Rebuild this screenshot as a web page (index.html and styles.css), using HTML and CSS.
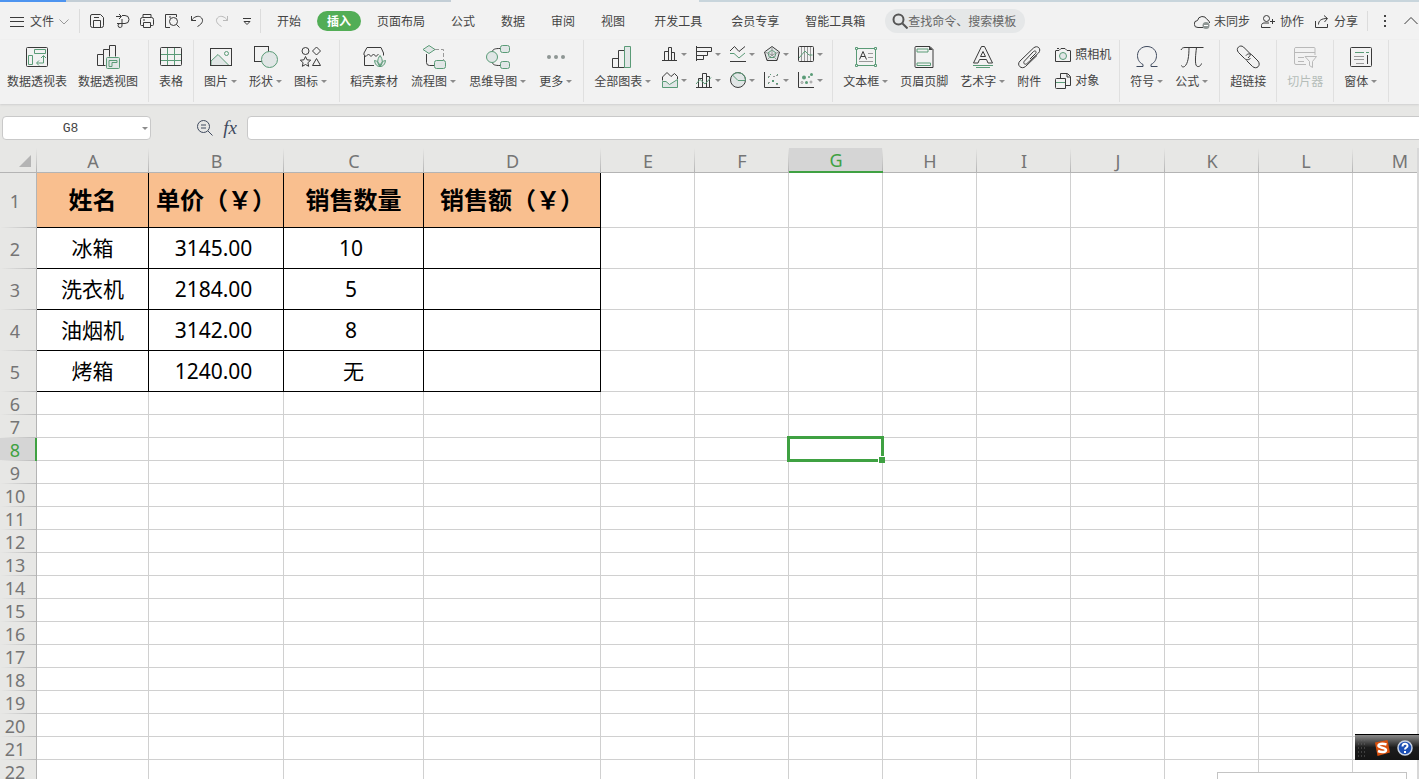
FILE: index.html
```html
<!DOCTYPE html>
<html lang="zh-CN">
<head>
    <meta charset="UTF-8">
    <meta name="viewport" content="width=device-width, initial-scale=1.0">
    <title>表格</title>
    <link rel="stylesheet" href="styles.css">
</head>
<body>
    <div class="doc-tabs">
        <div class="doc-tab active"></div>
        <div class="doc-tab"></div>
        <div class="doc-gap"></div>
        <div class="doc-rest"></div>
    </div>

    <header class="menu-bar">
        <button class="file-btn" type="button">
            <svg class="small" viewBox="0 0 16 16"><path d="M1 3.500h14M1 7.500h14M1 12.500h14"/></svg>
            文件
            <svg class="chevron" viewBox="0 0 10 6"><path class="gray" d="M.5.5 5 5 9.5.5"/></svg>
        </button>
        <div class="quick">
            <button type="button" aria-label="保存"><svg class="small" viewBox="0 0 16 16"><path d="M3 1.500h8.500l3 3V12.500a2 2 0 0 1-2 2h-9a2 2 0 0 1-2-2v-9.500a1.500 1.500 0 0 1 1.500-1.500zM4.500 14V7.500h7V14M5 4.500h5"/></svg></button>
            <button type="button" aria-label="输出"><svg class="small" viewBox="0 0 16 16"><path d="M2 3.500h5M5 1l2.500 2.500L5 6M8 2.500h3a4 4 0 0 1 0 8H3M8 6v6a2 2 0 1 1-2-1.500"/></svg></button>
            <button type="button" aria-label="打印"><svg class="small" viewBox="0 0 16 16"><path d="M4 4.500v-3h8v3M4 12.500H2.500a1 1 0 0 1-1-1v-5a2 2 0 0 1 2-2h9a2 2 0 0 1 2 2v5a1 1 0 0 1-1 1H12M4.500 9.500h7v5h-7zM4 7h2"/></svg></button>
            <button type="button" aria-label="打印预览"><svg class="small" viewBox="0 0 16 16"><path d="M6 14.500H1.500v-13h11V4M5 4h2M12.500 11.500l3 3"/><circle cx="9.500" cy="8.500" r="4"/></svg></button>
            <button type="button" aria-label="撤销"><svg class="small" viewBox="0 0 16 16"><path d="M2.500 3v4.500H7M2.500 7.500C5 3.500 9 2.500 11.500 4c3.500 2.500 2.500 6.500-3 9.500"/></svg></button>
            <button type="button" aria-label="恢复" disabled><svg class="small" viewBox="0 0 16 16"><path class="light" d="M13.500 3v4.500H9M13.500 7.500C11 3.500 7 2.500 4.500 4c-3.500 2.500-2.500 6.500 3 9.500"/></svg></button>
            <button type="button" aria-label="自定义"><svg class="small" viewBox="0 0 16 16"><path d="M4 5.500h8M5 8.500l3 3 3-3z"/></svg></button>
        </div>
        <nav class="tabs">
            <button type="button">开始</button>
            <button class="active" type="button">插入</button>
            <button type="button">页面布局</button>
            <button type="button">公式</button>
            <button type="button">数据</button>
            <button type="button">审阅</button>
            <button type="button">视图</button>
            <button class="dev" type="button">开发工具</button>
            <button type="button">会员专享</button>
            <button type="button">智能工具箱</button>
        </nav>
        <label class="search">
            <svg class="small" viewBox="0 0 16 16"><circle class="thick" cx="6.500" cy="6.500" r="5"/><path class="thick" d="M10.500 10.500l5 5"/></svg>
            <input type="text" placeholder="查找命令、搜索模板" aria-label="查找命令、搜索模板">
        </label>
        <div class="account">
            <button type="button"><svg class="small" viewBox="0 0 16 16"><path d="M9 13.500H4a3.500 3.500 0 0 1-.500-7A5 5 0 0 1 13 5.500c1.500.5 2.500 2 2.500 3.500"/><circle class="dot" cx="12" cy="11.500" r="3.500"/><path class="white" d="M10 11.500h4"/></svg>未同步</button>
            <button type="button"><svg class="small" viewBox="0 0 16 16"><circle cx="6.500" cy="4.500" r="3"/><path d="M10.500 13.500h-9v-2c0-1.500 1-2.500 2.500-2.500h5M10 7.500h5M12.500 5v5"/></svg>协作</button>
            <button type="button"><svg class="small" viewBox="0 0 16 16"><path d="M1.500 7v6.500h12V10M4.500 10.500c0-4 3-6 8.500-6M10 1.500l3.500 3L10.500 8"/></svg>分享</button>
        </div>
        <button class="more-btn" type="button" aria-label="更多"><svg class="small" viewBox="0 0 16 16"><path class="bullets" d="M7 2h2v2H7zM7 7h2v2H7zM7 12h2v2H7z"/></svg></button>
        <button class="fold-btn" type="button" aria-label="收起功能区"><svg class="small" viewBox="0 0 16 16"><path d="M1.500 11 8 4.500l6.500 6.500"/></svg></button>
    </header>

    <section class="ribbon">
        <div class="group first">
            <button class="tool" type="button">
                <svg class="icon" viewBox="0 0 24 24"><rect x="1.500" y="2.500" width="21" height="19" rx="1"/><path class="green" d="M9.500 4.500h11v4h-11zM3.500 10.500h4v9h-4zM18.500 11v7H12M16 13l2.500-2.500L21 13M14 15.500 11.500 18l2.500 2.500"/></svg>
                <span>数据透视表</span>
            </button>
            <button class="tool" type="button">
                <svg class="icon" viewBox="0 0 24 24"><path d="M1.500 20.500v-11h6v-5h6v-4h6v11M1.500 20.500h8M7.500 9.500v11M13.500 4.500v7"/><rect class="green fill" x="10.500" y="12.500" width="13" height="11" rx="1"/><path class="green" d="M13 21.500v-6h8v2h-5v4z"/></svg>
                <span>数据透视图</span>
            </button>
        </div>
        <div class="group">
            <button class="tool" type="button">
                <svg class="icon" viewBox="0 0 24 24"><path class="green" d="M2 9.500h20M2 15.500h20M8.500 3v18M15.500 3v18"/><rect x="1.500" y="2.500" width="21" height="18" rx="1"/></svg>
                <span>表格</span>
            </button>
        </div>
        <div class="group pictures">
            <button class="tool" type="button">
                <svg class="icon" viewBox="0 0 24 24"><path class="green fill" d="M2 16l7-6.500L20 20.500H2z"/><circle class="green" cx="17.500" cy="8.500" r="2"/><rect x="1.500" y="3.500" width="21" height="17"/></svg>
                <span>图片<i class="caret"></i></span>
            </button>
            <button class="tool" type="button">
                <svg class="icon" viewBox="0 0 24 24"><rect x=".500" y="1.500" width="14" height="15"/><circle class="green fill" cx="15.500" cy="14.500" r="8"/></svg>
                <span>形状<i class="caret"></i></span>
            </button>
            <button class="tool" type="button">
                <svg class="icon" viewBox="0 0 24 24"><circle cx="6.500" cy="6" r="3.500"/><path d="M17.500 2l4 4-4 4-4-4zM17.500 13.500l4 7h-8zM6.500 11.500l1.500 3.300 3.700.4-2.800 2.500.8 3.600-3.200-1.800-3.200 1.800.8-3.600-2.800-2.500 3.700-.4z"/></svg>
                <span>图标<i class="caret"></i></span>
            </button>
        </div>
        <div class="group shop">
            <button class="tool" type="button">
                <svg class="icon" viewBox="0 0 24 24"><path d="M2.500 11v9.500H12M5 2.500h14l2.500 5.500v2.500M5 2.500 2 8v2l2 1.500L6.500 9 9 11.500 11.500 9l2.500 2.500L16.500 9"/><path class="green fill" d="M18 21.500c-3-3-3-7 0-11 3 4 3 8 0 11zM18 21.500c-3 0-5-2-5.500-6 3 .5 5 2.500 5.500 6zM18 21.500c3 0 5-2 5.500-6-3 .5-5 2.500-5.500 6z"/></svg>
                <span>稻壳素材</span>
            </button>
            <button class="tool" type="button">
                <svg class="icon" viewBox="0 0 24 24"><path d="M4.500 9v8.500a3 3 0 0 0 3 3H12"/><path class="gray dash" d="M13 4.500h8.500V15"/><path class="green fill" d="M1 4.500l6-4 6 4-6 4z"/><rect class="green fill" x="12.500" y="15.500" width="11" height="8" rx="2"/></svg>
                <span>流程图<i class="caret"></i></span>
            </button>
            <button class="tool" type="button">
                <svg class="icon" viewBox="0 0 24 24"><path d="M6 7c1-3 3-3.500 8-3.500M6 17c1 3 3 3.500 8 3.500"/><circle class="green fill" cx="6" cy="12" r="5.500"/><rect class="green fill" x="14.500" y=".500" width="9" height="7" rx="2"/><rect class="green fill" x="14.500" y="16.500" width="9" height="7" rx="2"/></svg>
                <span>思维导图<i class="caret"></i></span>
            </button>
            <button class="tool" type="button">
                <svg class="icon" viewBox="0 0 24 24"><circle class="dot" cx="5" cy="12" r="2"/><circle class="dot" cx="12" cy="12" r="2"/><circle class="dot" cx="19" cy="12" r="2"/></svg>
                <span>更多<i class="caret"></i></span>
            </button>
        </div>
        <div class="group charts">
            <button class="tool" type="button">
                <svg class="icon" viewBox="0 0 24 24"><path d="M1.500 13.500h6v9h-6zM7.500 5.500h6v17h-6z"/><path class="green fill" d="M13.500 1.500h6v21h-6z"/></svg>
                <span>全部图表<i class="caret"></i></span>
            </button>
            <div class="chart-grid">
                <button type="button" aria-label="柱形图"><svg class="small" viewBox="0 0 16 16"><path d="M0 14.500h15M2.500 14V5.500h4M6.500 14V1.500h3V14M9.500 6.500h3V14"/></svg><i class="caret"></i></button>
                <button type="button" aria-label="条形图"><svg class="small" viewBox="0 0 16 16"><path d="M.500 0v15M.500 1.500h15v4H.500M11.500 5.500v4H.500M7.500 9.500v4H.500"/></svg><i class="caret"></i></button>
                <button type="button" aria-label="折线图"><svg class="small" viewBox="0 0 16 16"><path d="M0 5l4.500-4.500L9 5.500l6-5M0 15.500h16"/><path class="green" d="M0 7.500h4l5 4.500 6-5"/></svg><i class="caret"></i></button>
                <button type="button" aria-label="雷达图"><svg class="small" viewBox="0 0 16 16"><path class="fill" d="M8 .500l7.500 5.500L13 14.500H3L.500 6z"/><path class="green" d="M8 4l4 3-1.500 4.500h-5L4 7z"/><path class="gray" d="M8 1v8L3 14M8 9l5 5M8 9 1 6M8 9l7-3"/></svg><i class="caret"></i></button>
                <button type="button" aria-label="股价图"><svg class="small" viewBox="0 0 16 16"><path class="gray" d="M3.500 1v14M6.500 1v14M9.500 1v14M12.500 1v14"/><path class="green" d="M1 12l3-3.500L7 5l4 4h3.500"/><rect x=".500" y=".500" width="15" height="15" rx="1"/></svg><i class="caret"></i></button>
                <button type="button" aria-label="面积图"><svg class="small" viewBox="0 0 16 16"><path class="green fill" d="M.500 9.500h3.500l3.500 3 8-5v8H.500z"/><path d="M.500 8.500V5L5 .500l4 4 3.500-3 3 3V7"/></svg><i class="caret"></i></button>
                <button type="button" aria-label="组合图"><svg class="small" viewBox="0 0 16 16"><path d="M0 15.500h16M2.500 15V6.500h4M6.500 15V1.500h4V15M10.500 4.500h3V15"/><path class="green" d="M0 12l4-4.500 5 4.500 6-6.500"/></svg><i class="caret"></i></button>
                <button type="button" aria-label="饼图"><svg class="small" viewBox="0 0 16 16"><circle class="fill" cx="8" cy="8" r="7.500"/><path class="green" d="M2.500 3 8 8.500h7.500A7.500 7.500 0 0 0 2.500 3z"/></svg><i class="caret"></i></button>
                <button type="button" aria-label="散点图"><svg class="small" viewBox="0 0 16 16"><path d="M.500 0v15.500H16"/><path class="gdots" d="M8 8h2v2H8zM4 5h1v1H4zM12 11h2v2h-2zM4 11h1v1H4zM6 2h1v1H6zM13 2h1v1h-1z"/><path class="gray" d="M4 4.500h2M9 4.500h2M12 3.500h2M4 10.500h2M12 12.500h2"/></svg><i class="caret"></i></button>
                <button type="button" aria-label="气泡图"><svg class="small" viewBox="0 0 16 16"><path d="M.500 0v15.500H16"/><g class="gdots"><circle cx="6" cy="5.500" r="2"/><circle cx="13.500" cy="2.500" r="1.500"/><circle cx="8.500" cy="10.500" r="1.500"/><circle cx="11" cy="5" r="1"/></g><circle class="gray" cx="4" cy="10.500" r="1"/><circle class="gray" cx="13" cy="10" r="1"/></svg><i class="caret"></i></button>
            </div>
        </div>
        <div class="group text">
            <button class="tool" type="button">
                <svg class="icon" viewBox="0 0 24 24"><rect class="green" x="2.500" y="3.500" width="19" height="17"/><path class="green paper" d="M1.500 2.500h2v2h-2zM20.500 2.500h2v2h-2zM1.500 19.500h2v2h-2zM20.500 19.500h2v2h-2z"/><path d="M5.500 14.500l3.500-8 3.500 8M7 11.500h4"/><path class="gray" d="M14 8.500h5M14 12.500h5M5 16.500h14"/></svg>
                <span>文本框<i class="caret"></i></span>
            </button>
            <button class="tool" type="button">
                <svg class="icon" viewBox="0 0 24 24"><path d="M4 1.500h14l3 3V22.500H4a1 1 0 0 1-1-1v-19a1 1 0 0 1 1-1z"/><path class="ink" d="M17 1l4 4h-4z"/><path class="green" d="M5 4h11v3H5zM5 18h13.500v2.500H5z"/></svg>
                <span>页眉页脚</span>
            </button>
            <button class="tool" type="button">
                <svg class="icon" viewBox="0 0 24 24"><path d="M10.500 1.500h3l8 16.500h-4.500l-1.500-3.500h-7L7 18H2.500zM12 6.500l2.500 5h-5z"/><path class="green" d="M2 20.500h20M5 22.500h14"/></svg>
                <span>艺术字<i class="caret"></i></span>
            </button>
            <button class="tool" type="button">
                <svg class="icon" viewBox="0 0 24 24"><path d="M16.500 6.500l-9 9.500c-2 2 .5 4.500 2.500 2.500L21.500 8C25 4 20.500-.500 16.500 3L3 16c-4 4 1.500 9 5.500 5.500L20 10.500M16.500 6.500c2-1.500 3.500.5 2 2L13 14"/></svg>
                <span>附件</span>
            </button>
            <div class="side-tools">
                <button type="button"><svg class="small" viewBox="0 0 16 16"><path d="M1 3.500h3l2-2h4l2 2h3a.500.500 0 0 1 .500.500v10.500H.500V4a.500.500 0 0 1 .500-.500zM2 1.500h2"/><circle class="green fill" cx="8" cy="9" r="3.500"/></svg>照相机</button>
                <button type="button"><svg class="small" viewBox="0 0 16 16"><path d="M5.500 6V.500h7l3 3V12.500H11M12 1v3h3M1.500 5.500h9v10h-9a1 1 0 0 1-1-1v-8a1 1 0 0 1 1-1z"/><path class="green" d="M1 9.500h9"/></svg>对象</button>
            </div>
        </div>
        <div class="group menus">
            <button class="tool" type="button">
                <svg class="icon" viewBox="0 0 24 24"><path class="navy" d="M1.500 21.500H8v-2C4 17.500 2.500 14 2.500 10.500c0-5 4-9 9.500-9s9.500 4 9.500 9c0 3.500-1.500 7-5.500 9v2h6.500"/></svg>
                <span>符号<i class="caret"></i></span>
            </button>
            <button class="tool" type="button">
                <svg class="icon" viewBox="0 0 24 24"><path d="M1 5c1-2 2-2.500 4-2.500h18.500M9 2.500C9 11 8 19 4.500 21.500c-1.500 1-3 0-3-1M16.500 2.500c-1 8-1.500 14-.5 17.500 1 2.500 4.500 2 5.500-1.500"/></svg>
                <span>公式<i class="caret"></i></span>
            </button>
        </div>
        <div class="group">
            <button class="tool" type="button">
                <svg class="icon" viewBox="0 0 24 24"><path d="M14 8.500 7.500 2C4-1 -1 3.500 2.500 7.500l6 6c2 2 5 1.500 6-.5M10.500 15.500l6 6c4 3.500 9-1 5.500-5.500l-6-6c-2-2-5-1-6 .5M12 13c1.500-1.500 3-3 2-4.500"/></svg>
                <span>超链接</span>
            </button>
        </div>
        <div class="group">
            <button class="tool" type="button" disabled>
                <svg class="icon" viewBox="0 0 24 24"><path class="light" d="M13 19.500H3a1.500 1.500 0 0 1-1.500-1.500V3.500A1.500 1.500 0 0 1 3 2.500h18a1 1 0 0 1 1 1V10M2 7.500h20M5 12.500h6M5 16.500h6M12 11.500h11.500l-4 5v6l-3-2v-4z"/></svg>
                <span>切片器</span>
            </button>
        </div>
        <div class="group menus">
            <button class="tool" type="button">
                <svg class="icon" viewBox="0 0 24 24"><rect x="1.500" y="2.500" width="21" height="19" rx="1"/><path class="green" d="M6 7.500h9M17 7.500h3"/><path class="gray" d="M5 11.500h10M5 14.500h10M7 18.500h8"/><path d="M18.500 10v9"/></svg>
                <span>窗体<i class="caret"></i></span>
            </button>
        </div>
    </section>

    <div class="formula-bar">
        <div class="name-box">
            <input type="text" value="G8" aria-label="名称框">
            <i class="caret"></i>
        </div>
        <button class="zoom-btn" type="button" aria-label="浏览公式结果"><svg class="small" viewBox="0 0 16 16"><circle class="navy" cx="6.500" cy="6.500" r="6"/><path class="navy" d="M4 5h5M4 8h5M11 11l4.500 4.500"/></svg></button>
        <button class="fx-btn" type="button" aria-label="插入函数">fx</button>
        <input class="formula" type="text" aria-label="编辑栏">
    </div>

    <main class="sheet">
        <table class="grid">
            <colgroup>
                <col class="col-head"><col class="col-a"><col class="col-b"><col class="col-c"><col class="col-d">
                <col span="9">
            </colgroup>
            <thead>
                <tr>
                    <th class="corner"><svg viewBox="0 0 12 12"><path d="M12 0v12H0z"/></svg></th>
                    <th scope="col">A</th><th scope="col">B</th><th scope="col">C</th><th scope="col">D</th><th scope="col">E</th><th scope="col">F</th><th class="current" scope="col">G</th><th scope="col">H</th><th scope="col">I</th><th scope="col">J</th><th scope="col">K</th><th scope="col">L</th><th scope="col">M</th>
                </tr>
            </thead>
            <tbody>
                <tr class="title-row"><th scope="row">1</th><td class="data">姓名</td><td class="data">单价（￥）</td><td class="data">销售数量</td><td class="data">销售额（￥）</td><td></td><td></td><td></td><td></td><td></td><td></td><td></td><td></td><td></td></tr>
                <tr class="item-row"><th scope="row">2</th><td class="data">冰箱</td><td class="data num">3145.00</td><td class="data num">10</td><td class="data"></td><td></td><td></td><td></td><td></td><td></td><td></td><td></td><td></td><td></td></tr>
                <tr class="item-row"><th scope="row">3</th><td class="data">洗衣机</td><td class="data num">2184.00</td><td class="data num">5</td><td class="data"></td><td></td><td></td><td></td><td></td><td></td><td></td><td></td><td></td><td></td></tr>
                <tr class="item-row"><th scope="row">4</th><td class="data">油烟机</td><td class="data num">3142.00</td><td class="data num">8</td><td class="data"></td><td></td><td></td><td></td><td></td><td></td><td></td><td></td><td></td><td></td></tr>
                <tr class="item-row"><th scope="row">5</th><td class="data">烤箱</td><td class="data num">1240.00</td><td class="data">无</td><td class="data"></td><td></td><td></td><td></td><td></td><td></td><td></td><td></td><td></td><td></td></tr>
                <tr><th scope="row">6</th><td></td><td></td><td></td><td></td><td></td><td></td><td></td><td></td><td></td><td></td><td></td><td></td><td></td></tr>
                <tr><th scope="row">7</th><td></td><td></td><td></td><td></td><td></td><td></td><td></td><td></td><td></td><td></td><td></td><td></td><td></td></tr>
                <tr><th class="current" scope="row">8</th><td></td><td></td><td></td><td></td><td></td><td></td><td class="selected"><div class="selection"></div></td><td></td><td></td><td></td><td></td><td></td><td></td></tr>
                <tr><th scope="row">9</th><td></td><td></td><td></td><td></td><td></td><td></td><td></td><td></td><td></td><td></td><td></td><td></td><td></td></tr>
                <tr><th scope="row">10</th><td></td><td></td><td></td><td></td><td></td><td></td><td></td><td></td><td></td><td></td><td></td><td></td><td></td></tr>
                <tr><th scope="row">11</th><td></td><td></td><td></td><td></td><td></td><td></td><td></td><td></td><td></td><td></td><td></td><td></td><td></td></tr>
                <tr><th scope="row">12</th><td></td><td></td><td></td><td></td><td></td><td></td><td></td><td></td><td></td><td></td><td></td><td></td><td></td></tr>
                <tr><th scope="row">13</th><td></td><td></td><td></td><td></td><td></td><td></td><td></td><td></td><td></td><td></td><td></td><td></td><td></td></tr>
                <tr><th scope="row">14</th><td></td><td></td><td></td><td></td><td></td><td></td><td></td><td></td><td></td><td></td><td></td><td></td><td></td></tr>
                <tr><th scope="row">15</th><td></td><td></td><td></td><td></td><td></td><td></td><td></td><td></td><td></td><td></td><td></td><td></td><td></td></tr>
                <tr><th scope="row">16</th><td></td><td></td><td></td><td></td><td></td><td></td><td></td><td></td><td></td><td></td><td></td><td></td><td></td></tr>
                <tr><th scope="row">17</th><td></td><td></td><td></td><td></td><td></td><td></td><td></td><td></td><td></td><td></td><td></td><td></td><td></td></tr>
                <tr><th scope="row">18</th><td></td><td></td><td></td><td></td><td></td><td></td><td></td><td></td><td></td><td></td><td></td><td></td><td></td></tr>
                <tr><th scope="row">19</th><td></td><td></td><td></td><td></td><td></td><td></td><td></td><td></td><td></td><td></td><td></td><td></td><td></td></tr>
                <tr><th scope="row">20</th><td></td><td></td><td></td><td></td><td></td><td></td><td></td><td></td><td></td><td></td><td></td><td></td><td></td></tr>
                <tr><th scope="row">21</th><td></td><td></td><td></td><td></td><td></td><td></td><td></td><td></td><td></td><td></td><td></td><td></td><td></td></tr>
                <tr><th scope="row">22</th><td></td><td></td><td></td><td></td><td></td><td></td><td></td><td></td><td></td><td></td><td></td><td></td><td></td></tr>
            </tbody>
        </table>
    </main>

    <!-- input method bar, floats over the sheet -->
    <div class="ime-bar">
        <svg class="grip" viewBox="0 0 10 18"><path d="M1 1h8M1 5h8M1 9h8M1 13h8M1 17h8"/></svg>
        <svg class="ime-icon" viewBox="0 0 16 16"><path fill="#d94f0c" stroke="none" d="M1 2.500 13.500 0 16 12.500 3.500 16z"/><path d="M12.500 4.500C8 3 4 4 4.500 6s7.500 1.500 7.500 4-4.500 2.500-8 1" fill="none" stroke="#fff" stroke-width="2.500"/></svg>
        <svg class="ime-icon" viewBox="0 0 16 16"><circle cx="8" cy="8" r="7" fill="#1c4fb4" stroke="#c9d3e4" stroke-width="1.500"/><path d="M5.500 6.500C5.500 3 10.500 3 10.500 6c0 1.500-2.500 1.500-2.500 3.500M8 11v2" fill="none" stroke="#fff" stroke-width="2"/></svg>
    </div>
    <div class="popup-edge"></div>
</body>
</html>
```

FILE: styles.css
```css
* {
    box-sizing: border-box;
}

body {
    font-family: "Noto Sans", "Noto Sans CJK SC", sans-serif;
    font-size: 12px;
    line-height: 16px;
    color: #444;
    margin: 0;
    height: 100vh;
    display: flex;
    flex-direction: column;
    overflow: hidden;
    position: relative;
    background-color: #e7e7e5;
}

button,
input {
    font: inherit;
    color: inherit;
    background: none;
    border: none;
    padding: 0;
    margin: 0;
    outline: none;
}

button {
    display: flex;
    align-items: center;
    white-space: nowrap;
    flex-shrink: 0;
}

/* icons */
svg {
    display: block;
    flex-shrink: 0;
    fill: none;
    stroke: #3a3a3a;
}

.icon {
    width: 24px;
    height: 24px;
}

.small {
    width: 16px;
    height: 16px;
}

.chevron {
    width: 10px;
    height: 6px;
}

.green {
    stroke: #5a9b77;
}

.gray {
    stroke: #999;
}

.light {
    stroke: #b9b9b9;
}

.white {
    stroke: #fff;
}

.navy {
    stroke: #3f4a5e;
}

.fill {
    fill: #e1e6e6;
}

.paper {
    fill: #f2f2f2;
}

.thick {
    stroke-width: 2;
    stroke: #555;
}

.dash {
    stroke-dasharray: 4 2;
}

.dot {
    fill: #8e9694;
    stroke: none;
}

.bullets,
.ink {
    fill: #444;
    stroke: none;
}

.gdots {
    fill: #5a9b77;
    stroke: none;
}

.caret {
    width: 0;
    height: 0;
    border: 3px solid transparent;
    border-top-color: #8c8c8c;
    border-bottom: 0;
    flex-shrink: 0;
}

/* bottom edge of the document tabs */
.doc-tabs {
    display: flex;
    height: 2px;
    flex-shrink: 0;
    background-color: #f2f2f2;
}

.doc-tab {
    width: 385px;
    background-color: #c3ced6;
}

.doc-tab.active {
    width: 66px;
    background-color: #4d94f0;
}

.doc-gap {
    width: 248px;
}

.doc-rest {
    flex: 1;
    background-color: #c8d5dc;
}

/* menu */
.menu-bar {
    display: flex;
    align-items: center;
    height: 38px;
    flex-shrink: 0;
    background-color: #f2f2f2;
}

.file-btn {
    gap: 5px;
    height: 24px;
    padding: 1px 10px 0 9px;
    border-right: 1px solid #dcdcdc;
}

.quick {
    display: flex;
    align-items: center;
    gap: 9px;
    height: 24px;
    padding: 0 5px 0 9px;
    border-right: 1px solid #dcdcdc;
}

.tabs {
    display: flex;
    gap: 6px;
    padding-left: 6px;
}

.tabs button {
    height: 20px;
    padding: 2px 10px 0;
    border-radius: 10px;
}

.tabs .dev {
    padding: 2px 13px 0;
}

.tabs .active {
    background-color: #52ad56;
    color: #fff;
    font-weight: bold;
}

.search {
    display: flex;
    align-items: center;
    width: 140px;
    height: 24px;
    margin-left: 10px;
    padding-left: 7px;
    border-radius: 12px;
    background-color: #e5e7e8;
    flex-shrink: 0;
}

.search input {
    width: 112px;
    padding-top: 1px;
}

.search input::placeholder {
    color: #666;
    opacity: 1;
}

.account {
    display: flex;
    gap: 10px;
    height: 20px;
    margin-left: auto;
    padding-right: 9px;
    border-right: 1px solid #dcdcdc;
}

.account button {
    gap: 4px;
    padding-top: 2px;
}

.more-btn {
    margin-left: 9px;
}

.fold-btn {
    margin-left: 10px;
}

/* ribbon */
.ribbon {
    display: flex;
    height: 64px;
    padding-bottom: 2px;
    flex-shrink: 0;
    background-color: #f2f2f2;
    box-shadow: 0 1px 2px #cfcfcf;
}

.group {
    display: flex;
    gap: 12px;
    padding: 0 10px;
    border-right: 1px solid #e0e0e0;
}

.group.first {
    gap: 11px;
    padding-left: 7px;
}

.group.pictures {
    padding-right: 12px;
}

.group.shop {
    gap: 13px;
    padding-right: 11px;
}

.group.menus {
    padding-right: 11px;
}

.group.charts {
    gap: 11px;
    padding-right: 0;
}

.group.text {
    padding-right: 8px;
}

.tool {
    flex-direction: column;
    gap: 5px;
    padding-top: 5px;
}

.tool span {
    display: flex;
    align-items: center;
}

.tool .caret,
.chart-grid .caret {
    margin-left: 3px;
}

.tool .caret {
    margin-bottom: 2px;
}

.tool:disabled {
    color: #b5bdb9;
}

.chart-grid {
    display: grid;
    grid-template-columns: repeat(5, 34px);
    grid-auto-rows: 26px;
    padding-top: 1px;
}

.side-tools {
    display: grid;
    grid-auto-rows: 26px;
    padding-top: 1px;
    padding-left: 2px;
}

.side-tools button {
    gap: 4px;
    padding-top: 1px;
}

/* formula bar */
.formula-bar {
    display: flex;
    align-items: center;
    height: 44px;
    padding: 4px 0 0 2px;
    flex-shrink: 0;
}

.name-box {
    display: flex;
    align-items: center;
    width: 149px;
    height: 24px;
    padding-right: 2px;
    background-color: #fff;
    border: 1px solid #c9c9c9;
    border-radius: 4px;
}

.name-box input {
    flex: 1;
    min-width: 0;
    padding: 2px 4px 0 0;
    text-align: center;
    font-family: "Liberation Mono", monospace;
    font-size: 13px;
}

.zoom-btn {
    margin-left: 46px;
}

.fx-btn {
    width: 24px;
    margin: 0 5px;
    justify-content: center;
    font-family: "Liberation Serif", serif;
    font-style: italic;
    font-size: 19px;
    color: #3f4a5e;
}

.formula {
    flex: 1;
    height: 24px;
    margin-right: -6px;
    background-color: #fff;
    border: 1px solid #c9c9c9;
    border-radius: 4px;
}

/* sheet */
.sheet {
    flex: 1;
    min-height: 0;
    overflow: hidden;
    border-right: 2px solid #d8d8d8;
}

.grid {
    width: 1447px;
    table-layout: fixed;
    border-spacing: 0;
    background-color: #fff;
}

.col-head {
    width: 37px;
}

.col-a {
    width: 112px;
}

.col-b {
    width: 135px;
}

.col-c {
    width: 140px;
}

.col-d {
    width: 177px;
}

.grid th {
    height: 23px;
    padding: 0;
    font-weight: normal;
    font-size: 18px;
    line-height: 22px;
    color: #757575;
    background: #e7e7e5 linear-gradient(to right, #e7e7e5, #bbb) bottom / 100% 1px no-repeat;
}

.grid thead th {
    height: 25px;
    padding-top: 2px;
    border-bottom: 1px solid #b4b4b4;
    background: #e7e7e5 linear-gradient(to bottom, #e7e7e5, #b4b4b4) right / 1px 100% no-repeat;
}

.grid tbody th {
    padding-right: 6px;
    border-right: 1px solid #b4b4b4;
}

.grid thead .current {
    padding-top: 1px;
    color: #3fa142;
    background-color: #d5d5d5;
    border-bottom: 2px solid #3fa142;
}

.grid tbody .current {
    color: #3fa142;
    background-color: #d5d5d5;
    border-right: 2px solid #3fa142;
    padding-right: 5px;
}

.corner svg {
    width: 12px;
    height: 12px;
    margin: 0 0 0 19px;
    fill: #b4b4b4;
    stroke: none;
}

.grid td {
    padding: 0;
    border-right: 1px solid #d0d0d0;
    border-bottom: 1px solid #d0d0d0;
    text-align: center;
    white-space: nowrap;
    color: #000;
    font-size: 21px;
    line-height: 22px;
}

.grid .title-row th {
    height: 55px;
}

.grid .item-row th {
    height: 41px;
}

.grid .data {
    border-color: #000;
}

.grid .num {
    padding-right: 5px;
}

.grid .title-row .data {
    font-size: 24px;
    font-weight: bold;
    background-color: #f9bf8f;
}

.selected {
    position: relative;
}

.selection {
    position: absolute;
    inset: -2px;
    border: 3px solid #3fa142;
}

.selection::after {
    content: "";
    position: absolute;
    right: -4px;
    bottom: -4px;
    width: 6px;
    height: 6px;
    background-color: #3fa142;
    border-top: 1px solid #fff;
    border-left: 1px solid #fff;
}

.ime-bar {
    position: absolute;
    right: 0;
    bottom: 19px;
    display: flex;
    align-items: center;
    gap: 7px;
    width: 64px;
    height: 26px;
    padding-left: 2px;
    border-top: 1px solid #000;
    background: linear-gradient(#8a8a8a, #1c1c1c 50%, #151515);
}

.grip {
    width: 10px;
    height: 18px;
    stroke: #666;
    stroke-dasharray: 1 2;
}

.ime-icon {
    width: 16px;
    height: 16px;
}

.popup-edge {
    position: absolute;
    right: 12px;
    bottom: 0;
    width: 190px;
    height: 7px;
    background-color: #fff;
    border: 1px solid #c4c4c4;
    border-bottom: none;
}
```
